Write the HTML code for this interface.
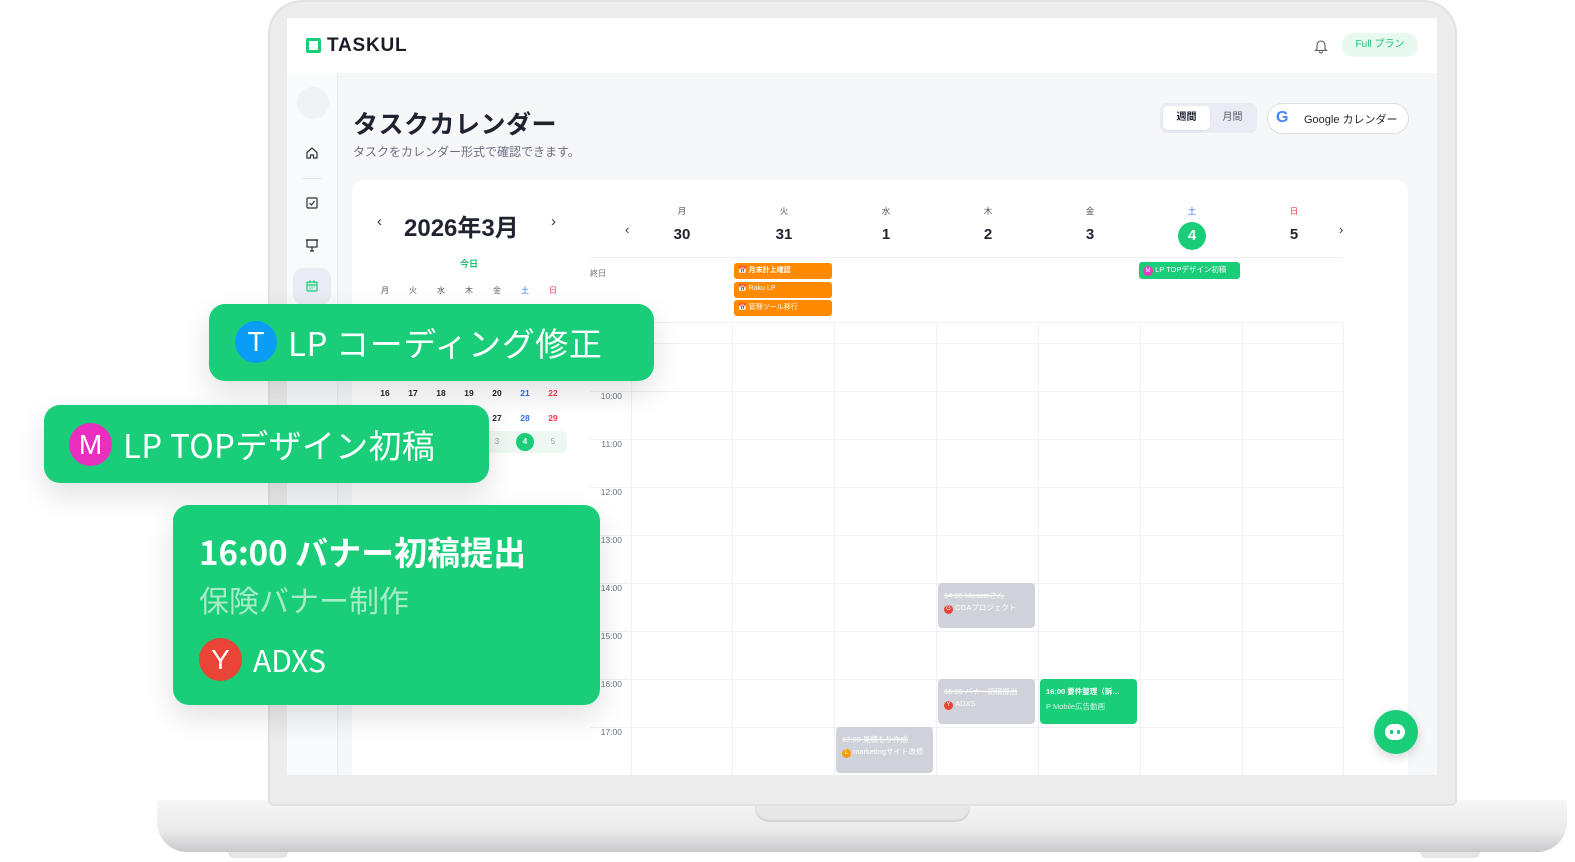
<!DOCTYPE html>
<html><head><meta charset="utf-8"><style>
*{margin:0;padding:0;box-sizing:border-box}
body{width:1575px;height:862px;background:#fff;position:relative;overflow:hidden;font-family:"Liberation Sans","Noto Sans CJK JP",sans-serif;color:#1f2330}
.a{position:absolute}
.c{text-align:center}
.ev{position:absolute;border-radius:3px;font-size:7px;color:#fff;padding:2px 4px;white-space:nowrap;overflow:hidden}
.gray{background:#cfd2d8;color:#fff;border-radius:4px;font-size:7.5px;padding:7px 6px}
.av{display:inline-block;border-radius:50%;color:#fff;text-align:center}
.hl{position:absolute;left:590px;width:753px;height:1px;background:#eef0f3}
.vl{position:absolute;top:322px;height:453px;width:1px;background:#f0f1f4}
.tl{position:absolute;left:590px;width:32px;text-align:right;font-size:8.5px;color:#6b7080}
.card{position:absolute;background:#19cd79;border-radius:16px;box-shadow:0 12px 30px rgba(0,0,0,.12);color:#fff}
.ct{font-family:"Noto Sans CJK JP","Liberation Sans",sans-serif}
</style></head><body>
<div class="a" style="left:157px;top:800px;width:1410px;height:52px;border-radius:4px 4px 30px 30px;background:linear-gradient(#f6f6f6,#eaeaea 60%,#c9c9cc);"></div>
<div class="a" style="left:755px;top:800px;width:215px;height:22px;border-radius:0 0 14px 14px;background:#e8e8e8;box-shadow:inset 0 -2px 2px #d0d0d0"></div>
<div class="a" style="left:228px;top:852px;width:60px;height:6px;background:#e5e5e5;border-radius:0 0 8px 8px"></div>
<div class="a" style="left:1420px;top:852px;width:60px;height:6px;background:#e5e5e5;border-radius:0 0 8px 8px"></div>
<div class="a" style="left:268px;top:0;width:1189px;height:806px;border-radius:34px 34px 6px 6px;background:#ececec;box-shadow:inset 0 0 0 2px #e2e2e2"></div>
<div class="a" style="left:287px;top:18px;width:1150px;height:757px;background:#f6f7f9;overflow:hidden">
 <div class="a" style="left:0;top:0;width:1150px;height:55px;background:#fff"></div>
 <div class="a" style="left:19px;top:20px;width:15px;height:15px;border:3px solid #19cd79;border-radius:2px"></div>
 <div class="a" style="left:40px;top:17px;font-size:19px;font-weight:bold;letter-spacing:.8px;color:#1a1d26">TASKUL</div>
 <svg class="a" style="left:1027px;top:20px" width="14" height="16" viewBox="0 0 14 16"><path d="M3 11V7a4 4 0 0 1 8 0v4l1.5 1.5h-11Z M5.5 13.5a1.5 1.5 0 0 0 3 0" fill="none" stroke="#555a66" stroke-width="1.1"/></svg>
 <div class="a c" style="left:1055px;top:15px;width:76px;height:24px;border-radius:12px;background:#e8f9ef;color:#19c272;font-size:10px;line-height:24px">Full プラン</div>
 <div class="a" style="left:0;top:55px;width:51px;height:702px;background:#f9fafb;border-right:1px solid #eceef1"></div>
 <div class="a" style="left:10px;top:69px;width:32px;height:32px;border-radius:50%;background:#f0f2f6"></div>
 <svg class="a" style="left:18px;top:128px" width="14" height="14" viewBox="0 0 14 14"><path d="M2 6.5L7 2l5 4.5V12H8.5V9h-3v3H2Z" fill="none" stroke="#2a2e38" stroke-width="1.2"/></svg>
 <div class="a" style="left:16px;top:160px;width:18px;height:1px;background:#e2e4e8"></div>
 <svg class="a" style="left:18px;top:178px" width="14" height="14" viewBox="0 0 14 14"><rect x="2" y="2" width="10" height="10" rx="1" fill="none" stroke="#2a2e38" stroke-width="1.2"/><path d="M4.5 7l2 2 3-4" fill="none" stroke="#2a2e38" stroke-width="1.1"/></svg>
 <svg class="a" style="left:18px;top:220px" width="14" height="15" viewBox="0 0 14 15"><rect x="2" y="2" width="10" height="7" fill="none" stroke="#2a2e38" stroke-width="1.2"/><path d="M1 2h12M7 9v4M5 13h4" stroke="#2a2e38" stroke-width="1.2"/></svg>
 <div class="a" style="left:6px;top:250px;width:38px;height:37px;border-radius:10px;background:#e9ecf2"></div>
 <svg class="a" style="left:18px;top:261px" width="14" height="14" viewBox="0 0 14 14"><rect x="2" y="3" width="10" height="9" rx="1" fill="none" stroke="#19cd79" stroke-width="1.2"/><path d="M2 6h10M5 1.5v3M9 1.5v3" stroke="#19cd79" stroke-width="1.2"/><path d="M4.5 8h1M6.5 8h1M8.5 8h1M4.5 10h1M6.5 10h1" stroke="#19cd79"/></svg>
 <div class="a" style="left:66px;top:87px;font-size:25px;font-weight:bold;letter-spacing:.5px;color:#1f2330">タスクカレンダー</div>
 <div class="a" style="left:66px;top:125px;font-size:12px;color:#6b7080">タスクをカレンダー形式で確認できます。</div>
 <div class="a" style="left:873px;top:85px;width:97px;height:30px;border-radius:7px;background:#e9ecf2"></div>
 <div class="a c" style="left:876px;top:88px;width:47px;height:24px;border-radius:5px;background:#fff;font-size:10px;font-weight:bold;line-height:24px;box-shadow:0 1px 2px rgba(0,0,0,.06)">週間</div>
 <div class="a c" style="left:923px;top:88px;width:45px;height:24px;font-size:10px;line-height:24px;color:#555a66">月間</div>
 <div class="a" style="left:980px;top:85px;width:142px;height:31px;border-radius:16px;background:#fff;border:1px solid #dcdfe4"></div>
 <div class="a" style="left:989px;top:91px;font-size:16px;font-weight:bold;color:#4285f4">G</div>
 <div class="a" style="left:1017px;top:93px;font-size:11px;color:#1f2330">Google カレンダー</div>
 <div class="a" style="left:65px;top:162px;width:1056px;height:620px;border-radius:12px;background:#fff"></div>
</div>
<div class="a" style="left:377px;top:213px;font-size:15px;color:#333">‹</div>
<div class="a" style="left:404px;top:208px;font-size:24px;font-weight:bold;color:#1f2330">2026年3月</div>
<div class="a" style="left:551px;top:213px;font-size:15px;color:#333">›</div>
<div class="a c" style="left:449px;top:257px;width:40px;font-size:9px;font-weight:bold;color:#19c272">今日</div>
<div class="a" style="left:371px;top:285px;width:196px;font-size:8px;display:grid;grid-template-columns:repeat(7,28px);text-align:center;color:#555">
<span>月</span><span>火</span><span>水</span><span>木</span><span>金</span><span style="color:#2f6ff0">土</span><span style="color:#ef3a4f">日</span></div>
<div class="a" style="left:371px;top:306px;width:196px;font-size:8.5px;font-weight:bold;display:grid;grid-template-columns:repeat(7,28px);grid-auto-rows:25px;text-align:center;color:#1f2330;line-height:25px">
<span></span><span></span><span></span><span></span><span></span><span></span><span style="color:#ef3a4f">1</span>
<span>2</span><span>3</span><span>4</span><span>5</span><span>6</span><span style="color:#2f6ff0">7</span><span style="color:#ef3a4f">8</span>
<span>9</span><span>10</span><span>11</span><span>12</span><span>13</span><span style="color:#2f6ff0">14</span><span style="color:#ef3a4f">15</span>
<span>16</span><span>17</span><span>18</span><span>19</span><span>20</span><span style="color:#2f6ff0">21</span><span style="color:#ef3a4f">22</span>
<span>23</span><span>24</span><span>25</span><span>26</span><span>27</span><span style="color:#2f6ff0">28</span><span style="color:#ef3a4f">29</span>
</div>
<div class="a" style="left:371px;top:431px;width:196px;height:22px;border-radius:6px;background:#eef8f2;font-size:8px;display:grid;grid-template-columns:repeat(7,28px);text-align:center;color:#9aa0aa;line-height:22px">
<span>30</span><span>31</span><span>1</span><span>2</span><span>3</span><span><b style="display:inline-block;width:18px;height:18px;border-radius:50%;background:#19cd79;color:#fff;line-height:18px;margin-top:2px">4</b></span><span>5</span></div>
<div class="a" style="left:625px;top:222px;font-size:13px;color:#333">‹</div>
<div class="a" style="left:1339px;top:222px;font-size:13px;color:#333">›</div>
<div class="a" style="left:631px;top:205px;width:714px;display:grid;grid-template-columns:repeat(7,102px);text-align:center">
<span style="font-size:8.5px;color:#555">月</span><span style="font-size:8.5px;color:#555">火</span><span style="font-size:8.5px;color:#555">水</span><span style="font-size:8.5px;color:#555">木</span><span style="font-size:8.5px;color:#555">金</span><span style="font-size:8.5px;color:#2f6ff0">土</span><span style="font-size:8.5px;color:#ef3a4f">日</span>
</div>
<div class="a" style="left:631px;top:226px;width:714px;display:grid;grid-template-columns:repeat(7,102px);text-align:center;font-size:15px;font-weight:bold;color:#1f2330">
<span>30</span><span>31</span><span>1</span><span>2</span><span>3</span><span><b style="display:inline-block;width:28px;height:28px;margin-top:-4px;border-radius:50%;background:#19cd79;color:#fff;line-height:28px">4</b></span><span>5</span></div>
<div class="hl" style="top:257px"></div>
<div class="a" style="left:590px;top:268px;font-size:8px;color:#6b7080">終日</div>
<div class="ev" style="left:734px;top:263px;width:98px;height:16px;background:#ff8a00;font-weight:bold">📅 月末計上確認</div>
<div class="ev" style="left:734px;top:282px;width:98px;height:16px;background:#ff8a00">📅 Raku LP</div>
<div class="ev" style="left:734px;top:300px;width:98px;height:16px;background:#ff8a00">📅 管理ツール移行</div>
<div class="ev" style="left:1139px;top:262px;width:101px;height:17px;background:#19cd79;font-size:7.5px"><span class="av" style="width:10px;height:10px;background:#e93cc4;font-size:6px;line-height:10px">M</span> LP TOPデザイン初稿</div>
<div class="hl" style="top:322px"></div>
<div class="vl" style="left:631px"></div><div class="vl" style="left:732px"></div><div class="vl" style="left:834px"></div><div class="vl" style="left:936px"></div><div class="vl" style="left:1038px"></div><div class="vl" style="left:1140px"></div><div class="vl" style="left:1242px"></div><div class="vl" style="left:1343px"></div>
<div class="hl" style="top:343px"></div><div class="hl" style="top:391px"></div><div class="hl" style="top:439px"></div><div class="hl" style="top:487px"></div><div class="hl" style="top:535px"></div><div class="hl" style="top:583px"></div><div class="hl" style="top:631px"></div><div class="hl" style="top:679px"></div><div class="hl" style="top:727px"></div>
<div class="tl" style="top:391px">10:00</div><div class="tl" style="top:439px">11:00</div><div class="tl" style="top:487px">12:00</div><div class="tl" style="top:535px">13:00</div><div class="tl" style="top:583px">14:00</div><div class="tl" style="top:631px">15:00</div><div class="tl" style="top:679px">16:00</div><div class="tl" style="top:727px">17:00</div>
<div class="a gray" style="left:938px;top:583px;width:97px;height:45px"><s>14:00 Masatoさん</s><br><span class="av" style="width:9px;height:9px;background:#e84335;font-size:6px;line-height:9px;margin-top:4px">G</span> CGAプロジェクト</div>
<div class="a gray" style="left:938px;top:679px;width:97px;height:45px"><s>16:00 バナー初稿提出</s><br><span class="av" style="width:9px;height:9px;background:#e84335;font-size:6px;line-height:9px;margin-top:4px">Y</span> ADXS</div>
<div class="a gray" style="left:1040px;top:679px;width:97px;height:45px;background:#19cd79"><b>16:00 要件整理（訴…</b><br><span style="opacity:.8;display:inline-block;margin-top:4px">P Mobile広告動画</span></div>
<div class="a gray" style="left:836px;top:727px;width:97px;height:46px"><s>17:00 見積もり作成</s><br><span class="av" style="width:9px;height:9px;background:#f59a00;font-size:6px;line-height:9px;margin-top:4px">L</span> marketingサイト改修</div>
<div class="a" style="left:1374px;top:710px;width:44px;height:44px;border-radius:50%;background:#19cd79;box-shadow:0 4px 10px rgba(0,0,0,.15)"></div>
<div class="a" style="left:1385px;top:724px;width:20px;height:16px;border-radius:8px;background:#fff"></div>
<div class="a" style="left:1390px;top:730px;width:3px;height:4px;background:#19cd79;border-radius:1px"></div>
<div class="a" style="left:1397px;top:730px;width:3px;height:4px;background:#19cd79;border-radius:1px"></div>
<div class="card" style="left:209px;top:304px;width:445px;height:77px"></div>
<div class="a" style="left:235px;top:321px;width:42px;height:42px;border-radius:50%;background:#0b9cf5;color:#fff;font-size:28px;text-align:center;line-height:42px">T</div>
<div class="a ct" style="left:288px;top:318px;font-size:33px;line-height:48px;color:#fff;white-space:nowrap;letter-spacing:.6px">LP コーディング修正</div>
<div class="card" style="left:44px;top:405px;width:445px;height:78px"></div>
<div class="a" style="left:69px;top:423px;width:43px;height:43px;border-radius:50%;background:#ea2fc0;color:#fff;font-size:28px;text-align:center;line-height:43px">M</div>
<div class="a ct" style="left:123px;top:420px;font-size:33px;line-height:48px;color:#fff;white-space:nowrap;letter-spacing:.3px">LP TOPデザイン初稿</div>
<div class="card" style="left:173px;top:505px;width:427px;height:200px"></div>
<div class="a ct" style="left:199px;top:527px;font-size:33px;line-height:48px;font-weight:bold;color:#fff;white-space:nowrap">16:00 バナー初稿提出</div>
<div class="a ct" style="left:199px;top:577px;font-size:30px;line-height:44px;color:#a8ecc7;white-space:nowrap">保険バナー制作</div>
<div class="a" style="left:199px;top:638px;width:43px;height:43px;border-radius:50%;background:#e94436;color:#fff;font-size:28px;text-align:center;line-height:43px">Y</div>
<div class="a ct" style="left:253px;top:637px;font-size:30px;line-height:44px;color:#fff">ADXS</div>
</body></html>
